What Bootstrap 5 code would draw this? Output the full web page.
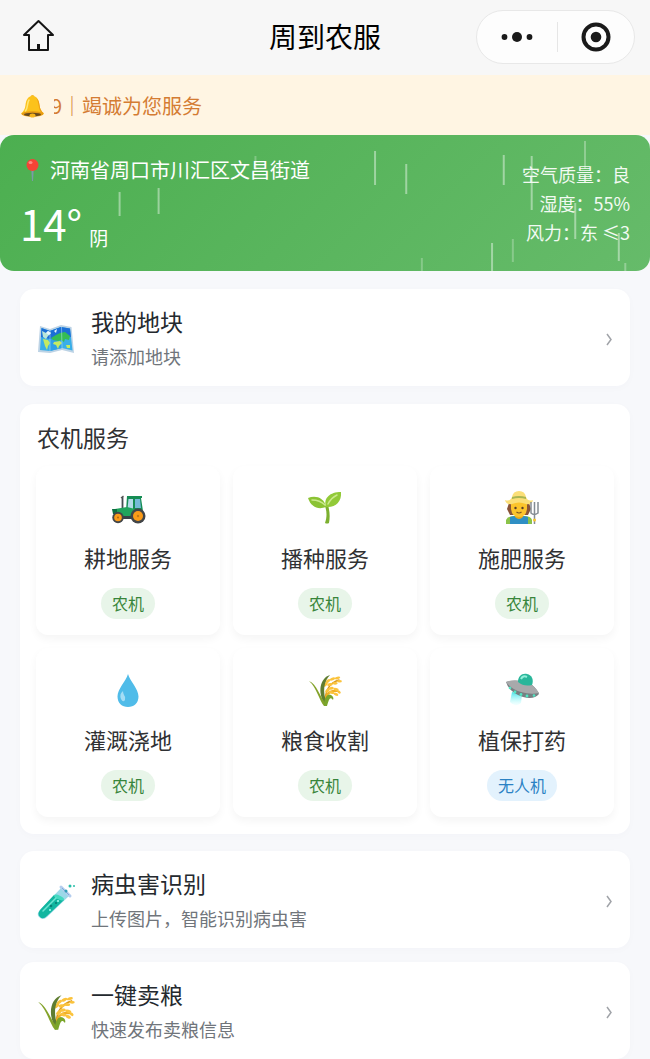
<!DOCTYPE html>
<html lang="zh-CN">
<head>
<meta charset="utf-8">
<meta name="viewport" content="width=device-width, initial-scale=1">
<title>周到农服</title>
<link href="https://cdn.jsdelivr.net/npm/bootstrap@5.3.0/dist/css/bootstrap.min.css" rel="stylesheet">
<style>
  body { background: #f7f8fb; color: #24292e; font-family: "Noto Sans CJK SC", sans-serif; line-height: 1.5; overflow-x: hidden; }
  a { color: inherit; text-decoration: none; }
  svg { display: block; flex-shrink: 0; }
  .topbar { background: #f7f7f7; height: 75px; padding: 0 15px 2px; }
  .home-link { margin-left: 5px; padding-top: 3px; }
  .topbar h1 { font-size: 28px; font-weight: 400; color: #000; line-height: 40px; padding-bottom: 2px; }
  .capsule { width: 159px; height: 54px; border: 1px solid #e8e8e8; border-radius: 27px; background: #fdfdfd; }
  .capsule .btn { border: 0; padding: 0; height: 52px; }
  .capsule-line { width: 1px; height: 30px; background: #e6e6e6; }
  .notice { background: #fff5e3; color: #d47c33; height: 60px; padding: 2px 20px 0; font-size: 20px; }
  .notice-track { margin-left: 9px; line-height: 30px; }
  .notice-text { margin-left: -3px; }
  .weather { background: linear-gradient(135deg, #4caf50, #66bb6a); border-radius: 14px; color: #fff; padding: 20px; height: 136px; }
  .rain { inset: 0; stroke: #fff; stroke-width: 2px; stroke-opacity: .42; }
  .place { font-size: 20px; line-height: 30px; gap: 5px; }
  .temp { font-size: 42px; line-height: 60px; margin-top: 8px; }
  .sky { font-size: 19px; line-height: 30px; margin-left: 7px; }
  .facts { font-size: 18px; line-height: 29px; padding-top: 5px; color: #f2faf2; }
  .page-body { padding: 18px 20px; }
  .panel { background: #fff; border-radius: 14px; box-shadow: 0 2px 8px rgba(30, 40, 80, .02); }
  .entry { height: 97px; padding: 2px 16px 0; gap: 15px; }
  .entry h2, .services h2 { font-size: 23px; font-weight: 400; line-height: 34px; margin: 0; }
  .entry p { font-size: 18px; line-height: 28px; color: #70757b; margin: 4px 0 0; }
  .entry-text { padding-bottom: 3px; }
  .services { margin: 18px 0 17px; padding: 16px 16px 17px; }
  .services h2 { color: #303133; margin-bottom: 12px; padding-left: 1px; }
  .tiles { display: grid; grid-template-columns: repeat(3, 1fr); gap: 13px; }
  .tile { height: 169px; padding-top: 24px; border-radius: 12px; background: #fff; box-shadow: 0 4px 8px rgba(0, 0, 0, .045); }
  .tile-name { font-size: 22px; line-height: 32px; margin-top: 15px; color: #303133; }
  .tag { font-size: 16px; line-height: 31px; padding: 0 11px; border-radius: 16px; margin-top: 15px; background: #e8f5e9; color: #38853b; }
  .tag-drone { background: #e3f2fd; color: #2b82c4; }
  .entry + .entry { margin-top: 14px; }
</style>
</head>
<body>
<svg width="0" height="0" class="position-absolute" aria-hidden="true">
  <symbol id="rice" viewBox="0 0 36 36">
    <g fill="none" stroke-linecap="round">
      <path d="M18 31C18 20 21 11 32 8" stroke="#d99a20" stroke-width="1.400"/>
      <path d="M18 31C18 23 22 18 30 19" stroke="#f0ae25" stroke-width="2.200"/>
    </g>
    <g fill="#fbc33c">
      <ellipse cx="18.500" cy="12.500" rx="2.800" ry="1.500" transform="rotate(-45 18.500 12.500)"/><ellipse cx="21" cy="9" rx="2.800" ry="1.400" transform="rotate(-35 21 9)"/>
      <ellipse cx="25.500" cy="7" rx="2.800" ry="1.400" transform="rotate(-22 25.500 7)"/><ellipse cx="30.500" cy="6" rx="2.800" ry="1.300" transform="rotate(-14 30.500 6)"/>
      <ellipse cx="23" cy="12.500" rx="2.800" ry="1.500" transform="rotate(-8 23 12.500)"/><ellipse cx="28" cy="11.300" rx="2.700" ry="1.400"/><ellipse cx="32.500" cy="9.300" rx="2.400" ry="1.300"/>
      <ellipse cx="20.500" cy="18.500" rx="2.800" ry="1.500" transform="rotate(-40 20.500 18.500)"/><ellipse cx="24" cy="16.300" rx="2.800" ry="1.400" transform="rotate(-8 24 16.300)"/><ellipse cx="29" cy="17.300" rx="2.800" ry="1.400" transform="rotate(14 29 17.300)"/>
      <ellipse cx="24.500" cy="20.500" rx="2.800" ry="1.400" transform="rotate(14 24.500 20.500)"/><ellipse cx="29" cy="22.300" rx="2.500" ry="1.400" transform="rotate(25 29 22.300)"/><ellipse cx="32" cy="20" rx="2" ry="1.300" transform="rotate(40 32 20)"/>
    </g>
    <path d="M18 33C10 20 13 6 23 3C17 9 15 19 20 32Z" fill="#5f7d31"/>
    <path d="M2 9C10 12 12 24 20 33L17 34C12 28 10 16 2 9Z" fill="#84a32b"/>
    <path d="M17 34C17 25 21 21 24 23C26 24 27 26 26 28C23 24 22 27 20 34Z" fill="#7aa52b"/>
  </symbol>
</svg>

<header class="topbar d-flex align-items-center">
  <div class="flex-fill w-50">
    <a href="#" class="home-link d-inline-block" aria-label="首页">
      <svg width="36" height="36" viewBox="0 0 36 36" fill="none" stroke="#151515" stroke-width="2" stroke-linejoin="round"><path d="M9 17H4L18.500 3L33 17H28V32H9Z"/><path d="M18.500 26V32" stroke-width="3"/></svg>
    </a>
  </div>
  <h1 class="m-0 text-nowrap">周到农服</h1>
  <div class="flex-fill w-50 d-flex justify-content-end">
    <div class="capsule d-flex align-items-center">
      <button class="btn flex-fill d-flex justify-content-center align-items-center" aria-label="更多">
        <svg width="34" height="12" viewBox="0 0 34 12" fill="#1a1a1a"><circle cx="4.500" cy="6" r="2.900"/><circle cx="17" cy="6" r="5"/><circle cx="29.500" cy="6" r="2.900"/></svg>
      </button>
      <span class="capsule-line"></span>
      <button class="btn flex-fill d-flex justify-content-center align-items-center" aria-label="关闭">
        <svg width="30" height="30" viewBox="0 0 30 30"><circle cx="15" cy="15" r="12.500" fill="none" stroke="#1a1a1a" stroke-width="4"/><circle cx="15" cy="15" r="5.300" fill="#1a1a1a"/></svg>
      </button>
    </div>
  </div>
</header>

<div class="notice d-flex align-items-center">
  <svg width="25" height="25" viewBox="0 0 25 25">
    <circle cx="12.500" cy="3" r="2" fill="#f6b51f"/>
    <path d="M12.500 2C17 2 19 6 19.500 11C20 15 21 17 24 19.500C22 23 3 23 1 19.500C4 17 5 15 5.500 11C6 6 8 2 12.500 2Z" fill="#fcc21b"/>
    <path d="M16 4C19 7 18 15 21.500 19L24 19.500C21 17 20 15 19.500 11C19 7 18 5 16 4Z" fill="#ed9d16"/>
    <path d="M9 6C7 9 8 14 5.500 17" stroke="#ffe675" stroke-width="1.500" fill="none" stroke-linecap="round"/>
    <ellipse cx="12.500" cy="20" rx="11" ry="2.800" fill="#e59b16"/><ellipse cx="12.500" cy="20.500" rx="8.500" ry="1.700" fill="#67491e"/><ellipse cx="12.500" cy="21.500" rx="3" ry="2" fill="#f6b51f"/>
  </svg>
  <div class="notice-track overflow-hidden flex-fill"><div class="notice-text text-nowrap">9｜竭诚为您服务</div></div>
</div>

<section class="weather position-relative d-flex justify-content-between">
  <svg class="rain position-absolute w-100 h-100" aria-hidden="true">
    <line x1="18.400%" x2="18.400%" y1="57" y2="81"/><line x1="24.400%" x2="24.400%" y1="53" y2="79"/><line x1="39.300%" x2="39.300%" y1="21" y2="35" stroke-opacity=".25"/>
    <line x1="57.700%" x2="57.700%" y1="16" y2="50"/><line x1="62.500%" x2="62.500%" y1="29" y2="59"/><line x1="77.500%" x2="77.500%" y1="20" y2="50"/>
    <line x1="81.800%" x2="81.800%" y1="21" y2="75"/><line x1="90%" x2="90%" y1="6" y2="34" stroke-opacity=".3"/><line x1="88.500%" x2="88.500%" y1="68" y2="104"/>
    <line x1="95.200%" x2="95.200%" y1="98" y2="126"/><line x1="78.900%" x2="78.900%" y1="104" y2="127" stroke-opacity=".25"/><line x1="75.700%" x2="75.700%" y1="108" y2="136"/>
    <line x1="64.900%" x2="64.900%" y1="123" y2="136" stroke-opacity=".25"/><line x1="96.200%" x2="96.200%" y1="128" y2="136" stroke-opacity=".3"/>
  </svg>
  <div class="position-relative">
    <div class="place d-flex align-items-center">
      <svg width="25" height="24" viewBox="0 0 25 24"><path d="M11.300 11H13.700L13 23H12Z" fill="#7a9ba8"/><circle cx="12.500" cy="7" r="6" fill="#f44336"/><ellipse cx="10.500" cy="4.500" rx="2" ry="1.500" fill="#ff8a80"/></svg>
      <span>河南省周口市川汇区文昌街道</span>
    </div>
    <div class="d-flex align-items-end"><span class="temp">14°</span><span class="sky">阴</span></div>
  </div>
  <div class="facts position-relative text-end text-nowrap">
    <div>空气质量：良</div><div>湿度：55%</div><div>风力：东 ≤3</div>
  </div>
</section>

<main class="page-body">
  <a href="#" class="panel entry d-flex align-items-center">
    <svg width="40" height="40" viewBox="0 0 40 40">
      <path d="M4 7L14 10L25 6L35.500 8L38 34L26 31L14 34L2 33Z" fill="#bdd3e5"/>
      <path d="M5.500 9L14 12L25 8L34 9.500L36.500 31.500L26 29L14 32L4 31Z" fill="#39aee8"/>
      <path d="M14 12L25 8L26 29L14 32Z" fill="#2f9fe6"/><path d="M5.500 9L14 12L25 8L34 9.500L35 18L25.500 16L14 20L5 18Z" fill="#1c6fd6"/>
      <path d="M6 12L10 14L12 12L15 14L12 17L10 20L7 18Z" fill="#b9e6d8"/>
      <path d="M15 19L20 16L24 14L29 13L34 17L33 21L29 20L28 23L25 21L22 22L17 21Z" fill="#35bd55"/>
      <path d="M7 20L12 21L14 24L12 27L11 31L9 27ZM18 23L24 22L26 24L23 27L22 30L20 26L17 25ZM30 26L34 26V29L31 29Z" fill="#c4ea62"/>
      <path d="M14 12V32M25.500 8L26 29" stroke="#bce8fa" stroke-opacity=".5"/>
      <path d="M12 12L15 14L13 16L10 14ZM18 12L21 10L20 14Z" fill="#e9f7ff"/>
    </svg>
    <div class="entry-text flex-fill"><h2>我的地块</h2><p>请添加地块</p></div>
    <svg width="10" height="14" viewBox="0 0 10 14" fill="none" stroke="#a0a3a8" stroke-width="1.500"><path d="M3 2L7 7.500L3 13"/></svg>
  </a>

  <section class="panel services">
    <h2>农机服务</h2>
    <div class="tiles">
      <a href="#" class="tile d-flex flex-column align-items-center">
        <svg width="36" height="36" viewBox="0 0 36 36">
          <path d="M12.500 7V19" stroke="#454c50" stroke-width="1.800"/><path d="M11 8L13.500 6" stroke="#555" stroke-width="1.500"/>
          <path d="M17 6H32V8H31L33 21H16Z" fill="#168d55"/><path d="M18.500 9H23V19H17.500Z" fill="#b5dbea"/><path d="M25 9H30L31 18H25Z" fill="#75bad8"/>
          <path d="M5 19L17 17L25 19V28H4V21Z" fill="#20a45c"/><path d="M2 19H7V24H3Z" fill="#0b7040"/><path d="M13 26H25V29H13Z" fill="#374248"/>
          <circle cx="8" cy="27.500" r="5.700" fill="#424548"/><circle cx="8" cy="27.500" r="3.800" fill="#fb9b19"/><circle cx="8" cy="27.500" r="1" fill="#b06a13"/>
          <circle cx="28" cy="26" r="7.500" fill="#424548"/><circle cx="28" cy="26" r="5" fill="#fb9b19"/><circle cx="28" cy="26" r="1.200" fill="#c57816"/>
        </svg>
        <span class="tile-name">耕地服务</span><span class="tag">农机</span>
      </a>
      <a href="#" class="tile d-flex flex-column align-items-center">
        <svg width="36" height="36" viewBox="0 0 36 36">
          <path d="M18 16L21 15C23 22 23 28 22 33Q20 34 18 33C20 27 20 22 18 16Z" fill="#7cb030"/>
          <path d="M1 8C8 5 17 7 19 17C11 20 4 17 1 8Z" fill="#8bc334"/><path d="M19 17C16 8 23 2 34 2C35 12 28 18 19 17Z" fill="#92ca38"/>
          <path d="M5 10C11 10 15 12 18 15M21 14C23 10 26 7 30 5" fill="none" stroke="#cbe98e" stroke-width="1.500" stroke-linecap="round"/>
        </svg>
        <span class="tile-name">播种服务</span><span class="tag">农机</span>
      </a>
      <a href="#" class="tile d-flex flex-column align-items-center">
        <svg width="36" height="36" viewBox="0 0 36 36">
          <path d="M5 13H25L27 19L24 25H6L3 19Z" fill="#8a5438"/><path d="M2 34V30Q4 26 10 26H20Q27 26 28 30V34Z" fill="#8bc34a"/>
          <path d="M6 27L10 26Q15 30 20 26L24 27V34H6Z" fill="#2f8fc4"/><path d="M11 23H19V27Q15 31 11 27Z" fill="#e8a91c"/>
          <path d="M7 12H23V19Q22 27 15 27Q8 27 7 19Z" fill="#fcc42c"/><circle cx="11.500" cy="18" r="1.200" fill="#593e28"/><circle cx="18.500" cy="18" r="1.200" fill="#593e28"/>
          <path d="M12.500 22Q15 24 17.500 22" fill="none" stroke="#795022" stroke-width="1.200"/>
          <path d="M1 10Q6 12 8 7Q9 1 15 1Q21 1 22 7Q24 12 29 10Q28 15 22 14Q15 11 8 14Q2 15 1 10Z" fill="#fbdf78"/><path d="M8 7Q15 5 22 7V9Q15 7 8 9Z" fill="#a9b653"/>
          <path d="M27 12V23Q30 26 34 23V12M30.500 12V34" fill="none" stroke="#858d94" stroke-width="1.500"/><circle cx="30.500" cy="30" r="1.500" fill="#fcc42c"/>
        </svg>
        <span class="tile-name">施肥服务</span><span class="tag">农机</span>
      </a>
      <a href="#" class="tile d-flex flex-column align-items-center">
        <svg width="36" height="36" viewBox="0 0 36 36"><path d="M18 2C20 9 28.500 17 28.500 24.500C28.500 31 24 35 18 35S7.500 31 7.500 24.500C7.500 17 16 9 18 2Z" fill="#50bce9"/><path d="M13 19Q9 22 11 27Q13 31 15 28Q16 25 14 23Q13 21 13 19Z" fill="#a5ddf5"/></svg>
        <span class="tile-name">灌溉浇地</span><span class="tag">农机</span>
      </a>
      <a href="#" class="tile d-flex flex-column align-items-center">
        <svg width="36" height="36"><use href="#rice"/></svg>
        <span class="tile-name">粮食收割</span><span class="tag">农机</span>
      </a>
      <a href="#" class="tile d-flex flex-column align-items-center">
        <svg width="36" height="36" viewBox="0 0 36 36">
          <defs><linearGradient id="beam" x1="0" y1="0" x2="0" y2="1"><stop offset="0" stop-color="#47e4e9"/><stop offset="1" stop-color="#c9ffff" stop-opacity=".2"/></linearGradient></defs>
          <path d="M8 20L18 23L17 31Q11 36 6 30Z" fill="url(#beam)"/>
          <path d="M2 10Q8 8 17 9L27 12Q33 17 35 22Q30 28 19 25Q5 20 2 10Z" fill="#777f82"/><path d="M2 10Q8 7 18 9L28 13Q33 17 35 21Q27 23 17 20Q7 17 2 10Z" fill="#a8a9ab"/>
          <path d="M14 10C14 4 18 1 23 2C28 3 30 8 28 13Q20 15 14 10Z" fill="#29b69a"/><path d="M17 7Q19 3 23 5" fill="none" stroke="#91efda" stroke-width="2"/>
          <g fill="#50e6c2"><circle cx="6" cy="16" r="1.300"/><circle cx="11" cy="20" r="1.400"/><circle cx="17" cy="22.500" r="1.400"/><circle cx="23" cy="24" r="1.400"/><circle cx="30" cy="23.500" r="1.300"/></g>
        </svg>
        <span class="tile-name">植保打药</span><span class="tag tag-drone">无人机</span>
      </a>
    </div>
  </section>

  <a href="#" class="panel entry d-flex align-items-center">
    <svg width="40" height="40" viewBox="0 0 40 40">
      <path d="M26 6L34 14L11 36Q7 40 3 36Q0 33 4 29Z" fill="#9bd9e8"/><path d="M18 14L28 19L11 35Q7 39 4 36Q1 33 4 29Z" fill="#12b6a0"/>
      <ellipse cx="23" cy="16.500" rx="5.500" ry="2" transform="rotate(25 23 16.500)" fill="#46d9c1"/><path d="M7 30L20 17" stroke="#6de5d2" stroke-width="1.500" stroke-linecap="round"/>
      <path d="M25 6L34 15" stroke="#b4cdee" stroke-width="3" stroke-linecap="round"/><path d="M26 7L33 14" stroke="#7dafd7"/>
      <g fill="#087f76"><circle cx="15" cy="25" r="1.300"/><circle cx="20" cy="22" r="1.100"/></g><g fill="#a6fff0"><circle cx="22" cy="20" r="1"/><circle cx="14" cy="29" r="1"/></g>
      <circle cx="34" cy="5" r="1.500" fill="#27bea9"/><circle cx="38" cy="5" r="1" fill="#27bea9"/><circle cx="30" cy="10" r="1.500" fill="#319fb8"/>
    </svg>
    <div class="entry-text flex-fill"><h2>病虫害识别</h2><p>上传图片，智能识别病虫害</p></div>
    <svg width="10" height="14" viewBox="0 0 10 14" fill="none" stroke="#a0a3a8" stroke-width="1.500"><path d="M3 2L7 7.500L3 13"/></svg>
  </a>
  <a href="#" class="panel entry d-flex align-items-center">
    <svg width="40" height="40"><use href="#rice"/></svg>
    <div class="entry-text flex-fill"><h2>一键卖粮</h2><p>快速发布卖粮信息</p></div>
    <svg width="10" height="14" viewBox="0 0 10 14" fill="none" stroke="#a0a3a8" stroke-width="1.500"><path d="M3 2L7 7.500L3 13"/></svg>
  </a>
</main>
<script src="https://cdn.jsdelivr.net/npm/bootstrap@5.3.0/dist/js/bootstrap.bundle.min.js"></script>
</body>
</html>
